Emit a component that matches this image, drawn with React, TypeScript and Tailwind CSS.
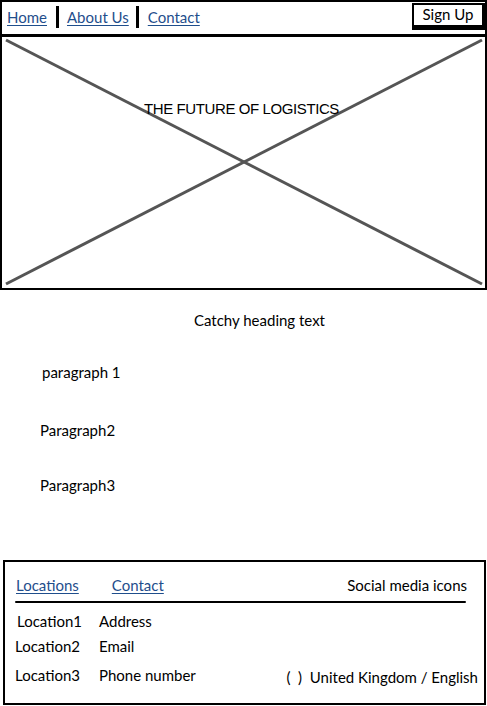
export default function App() {
  const sans = { fontFamily: '"Lato", "Open Sans", sans-serif' }
  return (
    <div className="w-[487px] h-[706px] bg-white text-black relative" style={sans}>
      {/* header */}
      <div className="h-[37px] border-2 border-b-[3px] border-black flex items-center pl-[5px] pr-0">
        <nav className="flex items-center text-[15px] text-[#1f4e8c] mt-[-2px]">
          <a className="underline underline-offset-2">Home</a>
          <span className="w-[3px] h-[22px] bg-black ml-[9px] mr-[8px]" />
          <a className="underline underline-offset-2">About Us</a>
          <span className="w-[3px] h-[22px] bg-black ml-[7px] mr-[9px]" />
          <a className="underline underline-offset-2">Contact</a>
        </nav>
        <button className="ml-auto mt-[-4px] w-[73px] h-[27px] border-2 border-black border-r-[3px] border-b-[5px] bg-white text-[15px] leading-none">
          Sign Up
        </button>
      </div>

      {/* hero image placeholder */}
      <div className="relative h-[253px] border-2 border-t-0 border-black">
        <svg className="absolute inset-0 w-full h-full" viewBox="0 0 483 251" preserveAspectRatio="none">
          <line x1="4" y1="3" x2="480" y2="247" stroke="#555" strokeWidth="3" />
          <line x1="480" y1="3" x2="4" y2="247" stroke="#555" strokeWidth="3" />
        </svg>
        <div
          className="relative pt-[61px] text-center text-[15px] tracking-[-0.4px] pr-[4px]"
          style={{ fontFamily: '"Liberation Sans", Arial, sans-serif' }}
        >
          THE FUTURE OF LOGISTICS
        </div>
      </div>

      {/* content */}
      <div className="text-[15px] leading-[20px]">
        <div className="pt-[20px] text-center pl-[32px]">Catchy heading text</div>
        <div className="pt-[32px] pl-[42px]">paragraph 1</div>
        <div className="pt-[38px] pl-[40px]">Paragraph2</div>
        <div className="pt-[35px] pl-[40px]">Paragraph3</div>
      </div>

      {/* footer */}
      <div className="absolute left-[3px] top-[560px] w-[483px] h-[145px] border-2 border-black px-[10px] text-[15px] leading-[20px]">
        <div className="flex items-center pt-[13px] pb-[6px]">
          <a className="underline underline-offset-2 text-[#1f4e8c] ml-[1px]">Locations</a>
          <a className="underline underline-offset-2 text-[#1f4e8c] ml-[33px]">Contact</a>
          <span className="ml-auto mr-[7px]">Social media icons</span>
        </div>
        <div className="h-[2px] bg-black w-[451px] rounded-full" />
        <div className="grid grid-cols-[84px_1fr_auto] mt-[8px]">
          <div className="pl-[2px]">Location1</div>
          <div>Address</div>
          <div />
          <div className="pt-[5px]">Location2</div>
          <div className="pt-[5px]">Email</div>
          <div />
          <div className="pt-[9px]">Location3</div>
          <div className="pt-[9px]">Phone number</div>
          <div className="pt-[11px] mr-[-4px] whitespace-pre">(  )  United Kingdom / English</div>
        </div>
      </div>
    </div>
  )
}
